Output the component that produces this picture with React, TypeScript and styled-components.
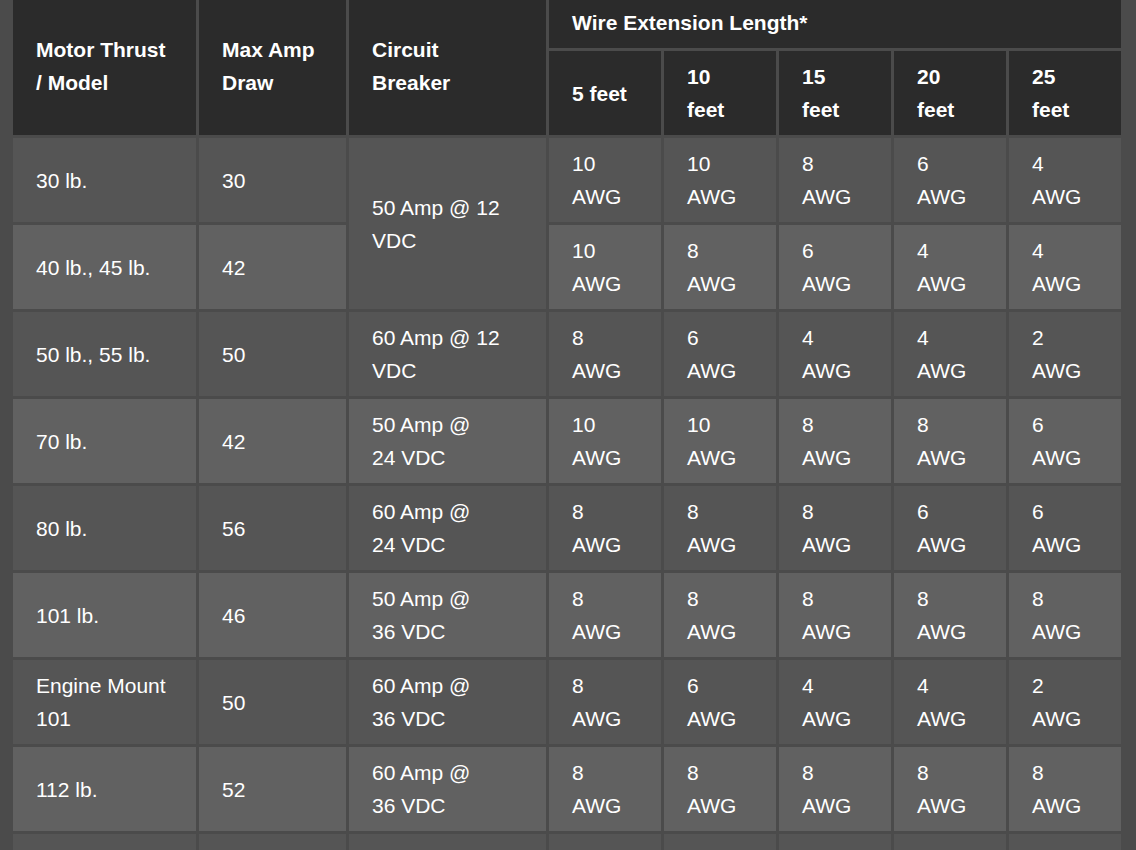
import React from "react";
import styled, { createGlobalStyle } from "styled-components";

const GlobalStyle = createGlobalStyle`
  html, body {
    margin: 0;
    padding: 0;
    background: #4b4b4b;
    font-family: "Liberation Sans", Arial, sans-serif;
    overflow: hidden;
  }
`;

const Page = styled.div`
  padding: 0 0 0 10px;
  margin-top: -6px;
  height: 856px;
  overflow: hidden;
`;

const Table = styled.table`
  width: 1113px;
  table-layout: fixed;
  border-collapse: separate;
  border-spacing: 3px;
  background: #4b4b4b;
  color: #ffffff;
  font-size: 21px;
  line-height: 33px;
`;

const Th = styled.th`
  background: #2b2b2b;
  font-weight: bold;
  text-align: left;
  vertical-align: middle;
  padding: 9px 8px 9px 23px;
`;

const Row = styled.tr<{ $alt: boolean }>`
  background: ${(p) => (p.$alt ? "#616161" : "#555555")};
`;

const Td = styled.td<{ $bg?: string }>`
  background: ${(p) => p.$bg ?? "inherit"};
  text-align: left;
  vertical-align: middle;
  padding: 9px 8px 9px 23px;
  height: 66px;
`;

type R = {
  model: string;
  amp: string;
  breaker?: React.ReactNode;
  span?: number;
  gauges: string[];
};

const rows: R[] = [
  { model: "30 lb.", amp: "30", breaker: "50 Amp @ 12 VDC", span: 2, gauges: ["10", "10", "8", "6", "4"] },
  { model: "40 lb., 45 lb.", amp: "42", gauges: ["10", "8", "6", "4", "4"] },
  { model: "50 lb., 55 lb.", amp: "50", breaker: "60 Amp @ 12 VDC", gauges: ["8", "6", "4", "4", "2"] },
  { model: "70 lb.", amp: "42", breaker: "50 Amp @ 24\u00a0VDC", gauges: ["10", "10", "8", "8", "6"] },
  { model: "80 lb.", amp: "56", breaker: "60 Amp @ 24\u00a0VDC", gauges: ["8", "8", "8", "6", "6"] },
  { model: "101 lb.", amp: "46", breaker: "50 Amp @ 36\u00a0VDC", gauges: ["8", "8", "8", "8", "8"] },
  { model: "Engine Mount 101", amp: "50", breaker: "60 Amp @ 36\u00a0VDC", gauges: ["8", "6", "4", "4", "2"] },
  { model: "112 lb.", amp: "52", breaker: "60 Amp @ 36\u00a0VDC", gauges: ["8", "8", "8", "8", "8"] },
];

const widths = [183, 147, 197, 112, 112, 112, 112, 112];
const lengths = ["5", "10", "15", "20", "25"];

export default function App() {
  return (
    <Page>
      <GlobalStyle />
      <Table>
        <colgroup>
          {widths.map((w, i) => (
            <col key={i} style={{ width: w }} />
          ))}
        </colgroup>
        <thead>
          <tr>
            <Th rowSpan={2}>
              Motor Thrust
              <br />/ Model
            </Th>
            <Th rowSpan={2}>
              Max Amp
              <br />
              Draw
            </Th>
            <Th rowSpan={2}>
              Circuit
              <br />
              Breaker
            </Th>
            <Th colSpan={5}>Wire Extension Length*</Th>
          </tr>
          <tr>
            {lengths.map((l) =>
              l === "5" ? (
                <Th key={l}>{l} feet</Th>
              ) : (
                <Th key={l}>
                  {l}
                  <br />
                  feet
                </Th>
              )
            )}
          </tr>
        </thead>
        <tbody>
          {rows.map((r, i) => (
            <Row key={i} $alt={i % 2 === 1}>
              <Td>{r.model}</Td>
              <Td>{r.amp}</Td>
              {r.breaker !== undefined && (
                <Td rowSpan={r.span ?? 1} $bg={r.span ? "#555555" : undefined}>
                  {r.breaker}
                </Td>
              )}
              {r.gauges.map((g, j) => (
                <Td key={j}>
                  {g}
                  <br />
                  AWG
                </Td>
              ))}
            </Row>
          ))}
          <Row $alt={false}>
            {widths.map((_, j) => (
              <Td key={j} />
            ))}
          </Row>
        </tbody>
      </Table>
    </Page>
  );
}
